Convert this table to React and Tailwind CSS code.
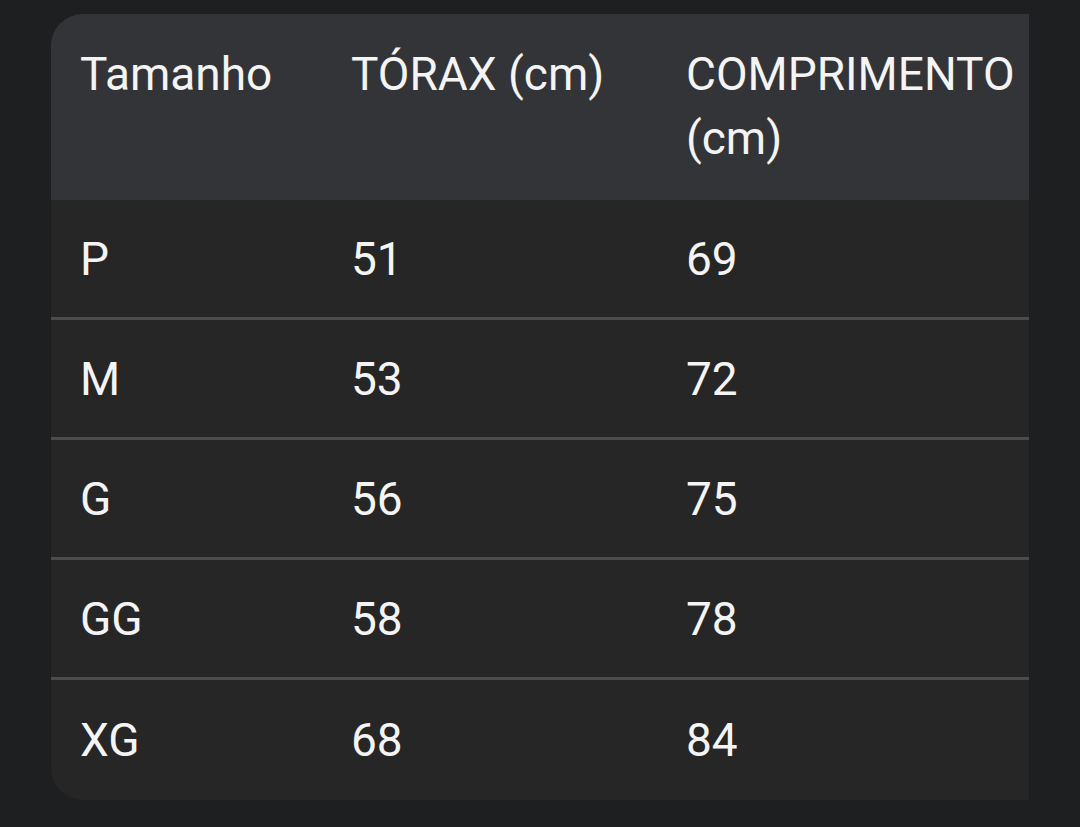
import React from "react";

const rows = [
  { size: "P", chest: "51", length: "69" },
  { size: "M", chest: "53", length: "72" },
  { size: "G", chest: "56", length: "75" },
  { size: "GG", chest: "58", length: "78" },
  { size: "XG", chest: "68", length: "84" },
];

const App = () => {
  return (
    <div
      className="w-[1080px] h-[827px] bg-[#1e1f21] pt-[14px] pl-[51px] overflow-hidden"
      style={{ fontFamily: "Roboto, 'Noto Sans', sans-serif" }}
    >
      <div className="w-[978px] rounded-l-[32px] overflow-hidden bg-[#262626] text-[#f4f4f4] text-[46px] leading-[64px]">
        {/* header */}
        <div className="grid grid-cols-[271px_335px_1fr] h-[186px] bg-[#333437] pt-[28px]">
          <div className="pl-[29px]">Tamanho</div>
          <div className="pl-[29px]">TÓRAX (cm)</div>
          <div className="pl-[29px] pr-[4px]">COMPRIMENTO (cm)</div>
        </div>

        {rows.map((r, i) => (
          <div
            key={r.size}
            className={`grid grid-cols-[271px_335px_1fr] items-center ${
              i < rows.length - 1
                ? "h-[120px] border-b-[3px] border-[#4a4c4d]"
                : "h-[120px]"
            }`}
          >
            <div className="pl-[29px]">{r.size}</div>
            <div className="pl-[29px]">{r.chest}</div>
            <div className="pl-[29px]">{r.length}</div>
          </div>
        ))}
      </div>
    </div>
  );
};

export default App;
